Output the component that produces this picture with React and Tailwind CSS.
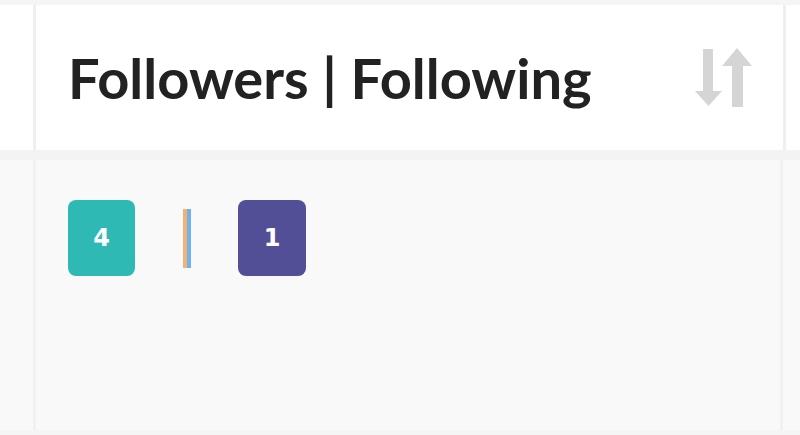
import React from "react";

function SortIcon() {
  return (
    <svg width="57" height="59" viewBox="0 0 57 59" className="block">
      <g fill="#d5d5d5">
        <rect x="8" y="1" width="10" height="43" />
        <polygon points="0,43 27,43 13.5,58" />
        <polygon points="27,18 57,18 42,0" />
        <rect x="37" y="17" width="11" height="42" />
      </g>
    </svg>
  );
}

export default function App() {
  return (
    <div className="w-[800px] h-[435px] bg-[#f5f5f5] pt-[5px] flex flex-col overflow-hidden">
      <div className="flex h-[145px] bg-white">
        <div className="w-[36px] border-r-[3px] border-[#efefef] bg-white" />
        <div className="w-[750px] flex items-center justify-between pl-[32px] pr-[31px] border-r-[3px] border-[#efefef]">
          <span
            className="text-[56px] font-bold text-[#222222] leading-none"
            style={{ fontFamily: "Lato, 'Noto Sans', sans-serif" }}
          >
            Followers | Following
          </span>
          <SortIcon />
        </div>
        <div className="flex-1 bg-white" />
      </div>
      <div className="h-[10px] bg-[#f3f3f3]" />
      <div className="flex h-[270px] bg-[#f9f9f9]">
        <div className="w-[36px] border-r-[3px] border-[#f1f1f1]" />
        <div className="w-[747px] flex items-start pl-[32px] pt-[40px] border-r-[3px] border-[#f1f1f1]">
          <div className="flex items-center">
            <div
              className="w-[67px] h-[76px] rounded-[8px] bg-[#2eb9b5] flex items-center justify-center text-white text-[24px] font-bold"
              style={{ fontFamily: "'DejaVu Sans', sans-serif" }}
            >
              4
            </div>
            <div className="ml-[48px] mr-[47px] flex h-[59px] w-[8px]">
              <div className="w-[4px] h-full bg-[#f2b271]" />
              <div className="w-[4px] h-full bg-[#6fb2f2]" />
            </div>
            <div
              className="w-[68px] h-[76px] rounded-[8px] bg-[#534f96] flex items-center justify-center text-white text-[24px] font-bold"
              style={{ fontFamily: "'DejaVu Sans', sans-serif" }}
            >
              1
            </div>
          </div>
        </div>
        <div className="flex-1" />
      </div>
    </div>
  );
}
